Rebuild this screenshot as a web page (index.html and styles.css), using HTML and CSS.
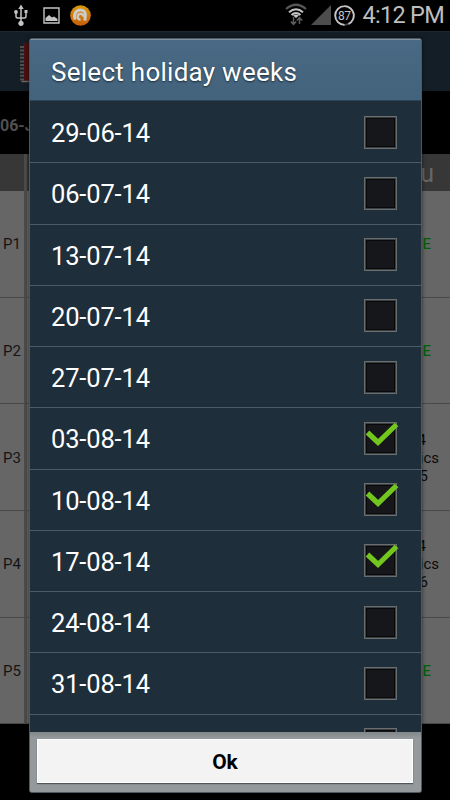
FILE: index.html
```html
<!DOCTYPE html>
<html lang="en">
<head>
<meta charset="utf-8">
<title>Holiday weeks</title>
<link rel="stylesheet" href="styles.css">
</head>
<body>
<div class="screen">
  <header class="status">
    <svg class="usb" width="14" height="22" viewBox="0 0 14 22" fill="none" stroke="#c4c4c4" stroke-width="1.5">
      <path d="M7 3V20M2 8v4.500q0 1.500 1.500 1.500H10.500q1.500 0 1.500-1.500V8"/>
      <path d="M4.300 5 7 .5 9.700 5zM10.500 6h3v3h-3z" fill="#c4c4c4" stroke="none"/>
      <circle cx="2" cy="8" r="1.900" fill="#c4c4c4" stroke="none"/><circle cx="7" cy="19.300" r="2.600" fill="#c4c4c4" stroke="none"/>
    </svg>
    <svg class="photo" width="17" height="17" viewBox="0 0 17 17">
      <path d="M1 1h15v15H1z" fill="none" stroke="#c4c4c4" stroke-width="1.400"/>
      <path d="M2.500 14V11l3.500-3 3 2.500 2-1 3.500 2.500v2z" fill="#c4c4c4"/>
    </svg>
    <svg class="avast" width="21" height="21" viewBox="0 0 21 21">
      <defs><linearGradient id="orange" x2="0" y2="1"><stop stop-color="#d99a08"/><stop offset="1" stop-color="#c95d08"/></linearGradient></defs>
      <circle cx="10.500" cy="10.500" r="10.300" fill="url(#orange)"/>
      <path d="M5.200 14.500C3.300 9.500 6 4.900 10.200 4.900c3.600 0 5.400 2.300 5.100 5.500l-.4 5.200" fill="none" stroke="#ccc" stroke-width="3"/>
      <path d="M13.500 11.700a2.900 2.900 0 1 0-2.900 3" fill="none" stroke="#ccc" stroke-width="2.200"/>
    </svg>
    <span class="grow"></span>
    <svg class="wifi" width="22" height="24" viewBox="0 0 22 24" fill="none">
      <path d="M1 6Q11-2.500 21 6" stroke="#555" stroke-width="2.200"/>
      <path d="M4 9.200Q11 3.200 18 9.200M6.500 12Q11 8 15.500 12" stroke="#c4c4c4" stroke-width="2"/>
      <path d="M8 12.500Q11 10.500 14 12.500L11 15z" fill="#c4c4c4"/>
      <path d="M8.500 14v7M5.800 18.500 8.500 21.300 11.200 18.500M14.500 21v-6M11.800 17.500 14.500 14.700 17.200 17.500" stroke="#5c5c5c" stroke-width="1.500"/>
    </svg>
    <svg class="signal" width="20" height="20" viewBox="0 0 20 20"><path d="M0 20 20 0V20z" fill="#4d4d4d"/></svg>
    <svg class="battery" width="21" height="21" viewBox="0 0 21 21">
      <circle cx="10.500" cy="10.500" r="9.300" fill="none" stroke="#444" stroke-width="1.800"/>
      <path d="M10.500 1.200a9.300 9.300 0 0 1 4 17.700M10.500 19.800a9.300 9.300 0 0 1 0-18.600" fill="none" stroke="#c4c4c4" stroke-width="1.800"/>
      <text x="10.300" y="14.600" text-anchor="middle" class="percent">87</text>
    </svg>
    <span class="clock">4:12 PM</span>
  </header>
  <div class="appbar">
    <svg width="30" height="42" viewBox="0 0 30 42"><path d="M3 1H30V39H3z" fill="#4a1010"/><path d="M1.500 39.500H30" stroke="#666" stroke-width="1.500"/><path d="M2 4V40" stroke="#505050" stroke-width="4" stroke-dasharray="2 1.600"/></svg>
  </div>
  <div class="week">06-J</div>
  <main class="table">
    <div class="line head"><div class="period"></div><div class="cell">u</div></div>
    <div class="line"><div class="period">P1</div><div class="cell free">E</div></div>
    <div class="line"><div class="period">P2</div><div class="cell free">E</div></div>
    <div class="line"><div class="period">P3</div><div class="cell lesson"><span class="room">4</span><span>ics</span><span class="num">5</span></div></div>
    <div class="line"><div class="period">P4</div><div class="cell lesson"><span class="room">4</span><span>ics</span><span class="num">6</span></div></div>
    <div class="line"><div class="period">P5</div><div class="cell free">E</div></div>
  </main>

  <section class="dialog">
    <h1 class="title"><span>Select holiday weeks</span></h1>
    <ul class="weeks">
      <li><span>29-06-14</span><i class="box"></i></li>
      <li><span>06-07-14</span><i class="box"></i></li>
      <li><span>13-07-14</span><i class="box"></i></li>
      <li><span>20-07-14</span><i class="box"></i></li>
      <li><span>27-07-14</span><i class="box"></i></li>
      <li><span>03-08-14</span><i class="box"><svg class="tick" viewBox="0 0 36 26"><path d="M3.500 10.500 14 20.500 32.500 2.500"/></svg></i></li>
      <li><span>10-08-14</span><i class="box"><svg class="tick" viewBox="0 0 36 26"><path d="M3.500 10.500 14 20.500 32.500 2.500"/></svg></i></li>
      <li><span>17-08-14</span><i class="box"><svg class="tick" viewBox="0 0 36 26"><path d="M3.500 10.500 14 20.500 32.500 2.500"/></svg></i></li>
      <li><span>24-08-14</span><i class="box"></i></li>
      <li><span>31-08-14</span><i class="box"></i></li>
      <li><span></span><i class="box"></i></li>
    </ul>
    <footer class="actions"><button class="ok">Ok</button></footer>
  </section>
</div>
</body>
</html>
```

FILE: styles.css
```css
* { box-sizing: border-box; }
body { margin: 0; background: #000; font-family: Roboto, sans-serif; }
.screen { position: relative; width: 450px; height: 800px; overflow: hidden; background: #000; }
.status { display: flex; align-items: flex-start; height: 31px; padding: 0 6px 0 14px; }
.status svg { flex: none; }
.usb { margin-top: 4px; }
.photo { margin: 7px 0 0 15px; }
.avast { margin: 5px 0 0 10px; }
.grow { flex: 1; }
.wifi { margin: 3px 4px 0 0; }
.signal { margin: 5px 3px 0 0; }
.battery { margin: 5px 7px 0 0; }
.percent { font-size: 12px; letter-spacing: -.5px; fill: #c4c4c4; }
.clock { color: #bebebe; font-size: 23.5px; line-height: 31px; letter-spacing: -.7px; white-space: nowrap; }
.appbar { height: 60px; padding: 10px 0 0 20px; background: #131e27; border-top: 1px solid #1c2932; }
.week { height: 63px; color: #505050; font-size: 16px; font-weight: 700; line-height: 69px; }
.table { background: #666; }
.line { display: flex; justify-content: space-between; height: 106.7px; border-bottom: 1px solid #484848; }
.head { height: 37px; background: #373737; border-bottom: 0; color: #666; }
.period { display: flex; align-items: center; width: 27px; padding: 1px 0 0 3px; border-right: 3px solid #4c4c4c; color: #151515; font-size: 15px; }
.cell { display: flex; align-items: center; padding: 1px 19px 0 0; font-size: 15px; }
.head .cell { padding-right: 16px; font-size: 25px; }
.free { color: #006000; }
.lesson { flex-direction: column; align-items: flex-end; justify-content: center; padding: 1px 11px 0 0; color: #0b0b0b; line-height: 18px; }
.room { margin-right: 13px; }
.num { margin-right: 11px; }
.dialog { position: absolute; left: 29px; top: 38px; display: flex; flex-direction: column; width: 393px; height: 755px; overflow: hidden; border: 1px solid #4d5962; border-radius: 3px; background: #93989b; box-shadow: 0 0 4px #0008; }
.title { display: flex; flex: none; align-items: center; height: 62px; margin: 0; padding: 3px 0 0 21px; background: linear-gradient(#496984, #43627c); border-top: 1px solid #8193a1; border-bottom: 1px solid #2e4558; color: #fff; font-size: 26px; font-weight: 400; letter-spacing: .27px; text-shadow: 0 1px 2px #0009; }
.weeks { height: 630.5px; margin: 0; padding: 1px 0 0; overflow: hidden; list-style: none; background: #1e2e3b; }
.weeks li { display: flex; align-items: center; justify-content: space-between; height: 61.25px; padding: 0 24px 0 21px; border-bottom: 1px solid #4a5c69; color: #fff; font-size: 25.5px; letter-spacing: -.15px; }
.weeks span { padding-top: 2px; }
.box { position: relative; width: 33px; height: 33px; border: 1px solid #686d70; background: #15171b; box-shadow: inset 0 0 0 1px #3c4043, inset 0 0 0 2px #080809; }
.tick { position: absolute; left: -1px; top: -1px; width: 36px; height: 26px; fill: none; stroke: #72c61e; stroke-width: 5.200; }
.actions { display: flex; flex: 1; padding: 7px 8px 9px 7px; background: linear-gradient(#82878a, #94999c 6px); }
.ok { flex: 1; margin: 0; padding: 2px 0 0; border: 1px solid #fff; background: #f3f3f3; box-shadow: 0 1px 1px #50565a; color: #000; font: 700 21px Roboto, sans-serif; }
```
